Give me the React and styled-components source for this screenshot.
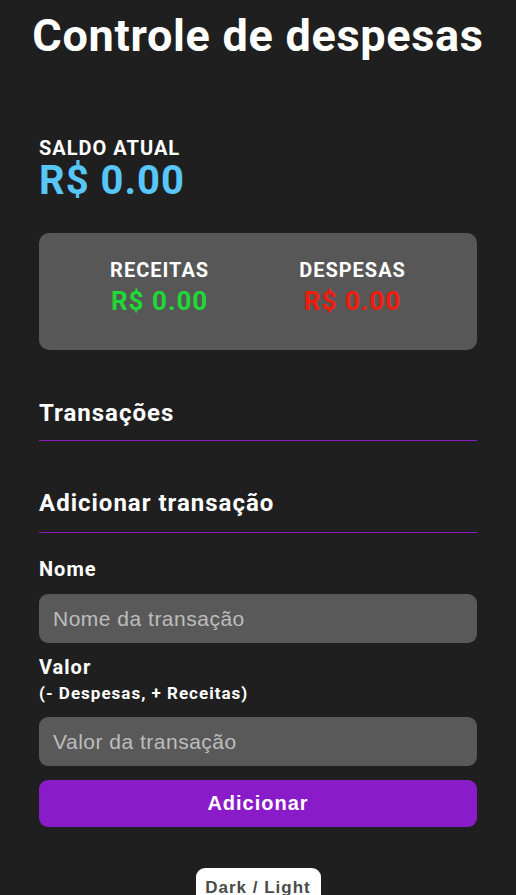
import React from 'react';
import styled, { createGlobalStyle } from 'styled-components';

const GlobalStyle = createGlobalStyle`
  * { box-sizing: border-box; }
  html, body {
    margin: 0;
    padding: 0;
    background-color: #1f1f1f;
    font-family: Roboto, "Liberation Sans", sans-serif;
    color: #fff;
  }
`;

const Page = styled.main`
  min-height: 895px;
  overflow: hidden;
`;

const Title = styled.h1`
  margin: 0;
  padding-top: 10px;
  text-align: center;
  font-size: 45px;
  line-height: 52px;
  font-weight: 700;
  letter-spacing: 0.7px;
`;

const Container = styled.div`
  width: 438px;
  margin: 0 auto;
  padding-top: 74px;
`;

/* saldo */
const Balance = styled.section`
  display: flex;
  flex-direction: column;
`;

const SmallLabel = styled.span`
  font-size: 20px;
  line-height: 24px;
  font-weight: 700;
  letter-spacing: 1px;
  text-transform: uppercase;
`;

const BigValue = styled.span`
  font-size: 40px;
  line-height: 42px;
  font-weight: 700;
  letter-spacing: 1px;
  color: #58c6f8;
`;

const SummaryCard = styled.section`
  margin-top: 31px;
  height: 117px;
  background-color: #575757;
  border-radius: 10px;
  display: flex;
  justify-content: center;
  gap: 90px;
  padding-top: 25px;
`;

const SummaryItem = styled.div`
  display: flex;
  flex-direction: column;
  align-items: center;
`;

const SummaryValue = styled.span`
  margin-top: 4px;
  font-size: 26px;
  line-height: 30px;
  font-weight: 700;
  letter-spacing: 1px;
  color: ${(p) => p.color};
`;

/* secoes */
const SectionTitle = styled.h2`
  margin: ${(p) => p.top}px 0 0;
  padding-bottom: ${(p) => p.bottom}px;
  font-size: 24px;
  line-height: 28px;
  font-weight: 700;
  letter-spacing: 1px;
  border-bottom: 1px solid #8e1bc2;
`;

const Form = styled.form`
  display: flex;
  flex-direction: column;
`;

const FieldLabel = styled.label`
  display: block;
  margin-top: ${(p) => p.top}px;
  font-size: 20px;
  line-height: 24px;
  font-weight: 700;
  letter-spacing: 1px;
`;

const Hint = styled.span`
  display: block;
  font-size: 17px;
  line-height: 20px;
  font-weight: 700;
  letter-spacing: 1px;
  margin-top: 4px;
`;

const Input = styled.input`
  width: 100%;
  height: 49px;
  margin-top: ${(p) => p.top}px;
  border: none;
  outline: none;
  border-radius: 9px;
  background-color: #595959;
  padding: 0 14px;
  font-family: "Liberation Sans", Arial, sans-serif;
  font-size: 21px;
  letter-spacing: 0.5px;
  color: #fff;

  &::placeholder {
    color: #bdbdbd;
  }
`;

const SubmitButton = styled.button`
  width: 100%;
  height: 47px;
  margin-top: 14px;
  border: none;
  border-radius: 9px;
  background-color: #8a1bc8;
  color: #fff;
  font-family: "Liberation Sans", Arial, sans-serif;
  font-size: 20px;
  font-weight: 700;
  letter-spacing: 1px;
  cursor: pointer;
`;

const ThemeRow = styled.div`
  display: flex;
  justify-content: center;
  margin-top: 41px;
`;

const ThemeButton = styled.button`
  width: 125px;
  height: 40px;
  border: none;
  border-radius: 9px;
  background-color: #fff;
  color: #4a4a4a;
  font-family: "Liberation Sans", Arial, sans-serif;
  font-size: 17px;
  line-height: 20px;
  font-weight: 700;
  letter-spacing: 1px;
  padding: 10px 0 0;
  display: flex;
  justify-content: center;
  align-items: flex-start;
`;

export default function App() {
  return (
    <>
      <GlobalStyle />
      <Page>
        <Title>Controle de despesas</Title>

        <Container>
          <Balance>
            <SmallLabel>Saldo atual</SmallLabel>
            <BigValue>R$ 0.00</BigValue>
          </Balance>

          <SummaryCard>
            <SummaryItem>
              <SmallLabel>Receitas</SmallLabel>
              <SummaryValue color="#1ed936">R$ 0.00</SummaryValue>
            </SummaryItem>
            <SummaryItem>
              <SmallLabel>Despesas</SmallLabel>
              <SummaryValue color="#f21c0c">R$ 0.00</SummaryValue>
            </SummaryItem>
          </SummaryCard>

          <SectionTitle top={49} bottom={13}>Transações</SectionTitle>

          <SectionTitle top={48} bottom={15}>Adicionar transação</SectionTitle>

          <Form onSubmit={(e) => e.preventDefault()}>
            <FieldLabel top={24}>Nome</FieldLabel>
            <Input top={13} type="text" placeholder="Nome da transação" />

            <FieldLabel top={12}>
              Valor
              <Hint>(- Despesas, + Receitas)</Hint>
            </FieldLabel>
            <Input top={14} type="text" placeholder="Valor da transação" />

            <SubmitButton type="submit">Adicionar</SubmitButton>
          </Form>

          <ThemeRow>
            <ThemeButton type="button">Dark / Light</ThemeButton>
          </ThemeRow>
        </Container>
      </Page>
    </>
  );
}
